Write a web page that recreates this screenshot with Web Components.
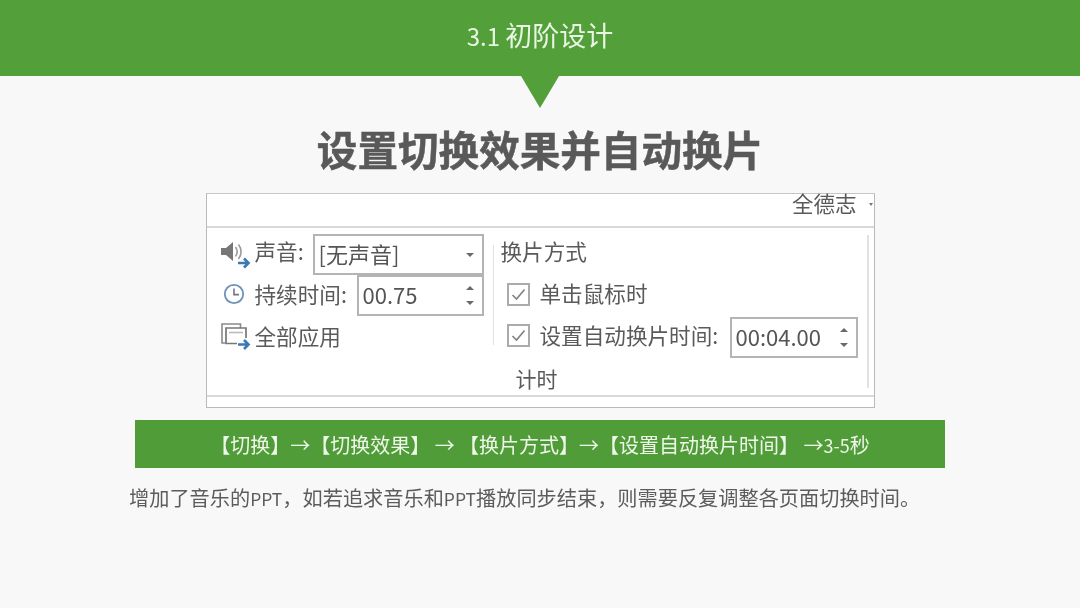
<!DOCTYPE html>
<html lang="zh">
<head>
<meta charset="utf-8">
<title>3.1 初阶设计</title>
<style>
  html, body { margin: 0; padding: 0; background: #f8f8f9; }
  body { width: 1080px; height: 608px; overflow: hidden; font-family: "Noto Sans CJK SC", "Noto Sans", sans-serif; }
  .small { font-size: 17.5px; }
  .smaller { font-size: 18px; }
  .num { font-size: 24px; }
</style>
</head>
<body>
<slide-page>
  <slide-header><span class="num">3.1 </span>初阶设计</slide-header>
  <slide-title>设置切换效果并自动换片</slide-title>
  <ribbon-panel owner="全德志">
    <ribbon-row slot="left" style="--lift: 8px">
      <ribbon-icon name="sound"></ribbon-icon>
      <span>声音:</span>
      <ribbon-input kind="select" width="171">[无声音]</ribbon-input>
    </ribbon-row>
    <ribbon-row slot="left" style="--lift: 4px">
      <ribbon-icon name="clock"></ribbon-icon>
      <span>持续时间:</span>
      <ribbon-input kind="spin" width="127">00.75</ribbon-input>
    </ribbon-row>
    <ribbon-row slot="left" style="--lift: 2px">
      <ribbon-icon name="apply"></ribbon-icon>
      <span>全部应用</span>
    </ribbon-row>
    <ribbon-row slot="right" style="--lift: 8px"><span>换片方式</span></ribbon-row>
    <ribbon-row slot="right" indent style="--lift: 8px">
      <ribbon-check></ribbon-check>
      <span>单击鼠标时</span>
    </ribbon-row>
    <ribbon-row slot="right" indent style="--lift: 6px">
      <ribbon-check></ribbon-check>
      <span>设置自动换片时间:</span>
      <ribbon-input kind="spin" width="128">00:04.00</ribbon-input>
    </ribbon-row>
    <span slot="group">计时</span>
  </ribbon-panel>
  <slide-banner>【切换】→【切换效果】 → 【换片方式】→【设置自动换片时间】 →<span class="smaller">3-5</span>秒</slide-banner>
  <slide-caption>增加了音乐的<span class="small">PPT</span>，如若追求音乐和<span class="small">PPT</span>播放同步结束，则需要反复调整各页面切换时间。</slide-caption>
</slide-page>

<script>
const ICONS = {
  sound: `<svg width="30" height="28" viewBox="0 0 30 28">
    <path d="M0 7h5l7-6v19l-7-6H0z" fill="#777"/>
    <path d="M14.5 6c2 2.8 2 6.6 0 9.4M17.5 3.5c3.4 4.2 3.4 10.2 0 14.4" fill="none" stroke="#9a9a9a" stroke-width="1.6"/>
    <path d="M17 22h10M23 17.5l4.5 4.5-4.5 4.5" fill="none" stroke="#3b78b5" stroke-width="2.6"/>
  </svg>`,
  clock: `<svg width="30" height="24" viewBox="0 0 30 24">
    <circle cx="13" cy="12" r="9.2" fill="none" stroke="#6d93b8" stroke-width="1.8"/>
    <path d="M13 6.5V12.6H18" fill="none" stroke="#6f7780" stroke-width="1.6"/>
  </svg>`,
  apply: `<svg width="30" height="27" viewBox="0 0 30 27">
    <path d="M4 20H1V1h18.5v4" fill="none" stroke="#8a8a8a" stroke-width="1.6"/>
    <path d="M16 20.5H5V5h20v10" fill="none" stroke="#777" stroke-width="1.7"/>
    <path d="M8 9.5h14" stroke="#bbb" stroke-width="1.6"/>
    <path d="M17 21.5h10M23 17l4.5 4.5-4.5 4.5" fill="none" stroke="#3b78b5" stroke-width="2.6"/>
  </svg>`
};

class ShadowElement extends HTMLElement {
  constructor() {
    super();
    this.attachShadow({ mode: 'open' });
    this.shadowRoot.innerHTML = this.markup();
  }
}

class SlidePage extends ShadowElement {
  markup() {
    return `<style>
      :host { display: flex; flex-direction: column; align-items: center; width: 1080px; height: 608px; }
    </style><slot></slot>`;
  }
}

class SlideHeader extends ShadowElement {
  markup() {
    return `<style>
      :host { display: block; position: relative; width: 100%; height: 76px; background: #53a03a; }
      .text { display: flex; align-items: baseline; justify-content: center; height: 68px; line-height: 70px; color: #eaf5e4; font-size: 27px; white-space: pre; filter: blur(0.3px); }
      .pointer { position: absolute; left: 521px; top: 76px; width: 0; height: 0;
        border-left: 19px solid transparent; border-right: 19px solid transparent; border-top: 32px solid #53a03a; }
    </style><div class="text"><span><slot></slot></span></div><div class="pointer"></div>`;
  }
}

class SlideTitle extends ShadowElement {
  markup() {
    return `<style>
      :host { display: block; margin-top: 45px; height: 56px; line-height: 56px; color: #595959;
        font-size: 40.6px; font-weight: 700; white-space: nowrap; -webkit-text-stroke: 0.5px #595959; filter: blur(0.4px); }
    </style><slot></slot>`;
  }
}

class RibbonPanel extends ShadowElement {
  markup() {
    return `<style>
      :host { display: block; box-sizing: border-box; width: 669px; height: 215px; margin-top: 16px;
        background: #fff; border: 1px solid #b9b9b9; border-top-color: #c6c6c6;
        color: #5a5a5a; font-size: 21.6px; filter: blur(0.45px); }
      .top { box-sizing: border-box; display: flex; justify-content: flex-end; align-items: flex-start; gap: 12px;
        height: 34px; padding-right: 1px; border-bottom: 2px solid #d9d9d9; }
      .owner { font-size: 21.5px; line-height: 18px; }
      .owner-arrow { width: 0; height: 0; margin-top: 9px; border-left: 2px solid transparent; border-right: 2px solid transparent; border-top: 3px solid #777; }
      .body { box-sizing: border-box; display: grid; grid-template-columns: 286px 1px 1fr 2px; height: 169px; padding-right: 5px; border-bottom: 2px solid #d9d9d9; }
      .left { display: grid; grid-auto-rows: 41px; align-content: start; padding: 6px 9px 0 14px; }
      .right { display: flex; flex-direction: column; padding: 6px 9px 0 7px; }
      .rows { display: grid; grid-auto-rows: 41.5px; }
      .group { display: block; margin: 4px 0 0 15px; line-height: 30px; font-size: 21px; }
      .sep { align-self: start; background: #e2e2e2; }
      .sep.a { margin-top: 17px; height: 100px; }
      .sep.b { margin-top: 7px; height: 153px; }
    </style>
    <div class="top"><span class="owner">${this.getAttribute('owner')}</span><span class="owner-arrow"></span></div>
    <div class="body">
      <div class="left"><slot name="left"></slot></div>
      <div class="sep a"></div>
      <div class="right">
        <div class="rows"><slot name="right"></slot></div>
        <div class="group"><slot name="group"></slot></div>
      </div>
      <div class="sep b"></div>
    </div>`;
  }
}

class RibbonRow extends ShadowElement {
  markup() {
    return `<style>
      :host { display: flex; align-items: center; white-space: nowrap; }
      :host([indent]) { padding-left: 6px; }
      ::slotted(span) { margin-bottom: var(--lift, 0); }
    </style><slot></slot>`;
  }
}

class RibbonIcon extends ShadowElement {
  markup() {
    return `<style>
      :host { display: flex; flex: none; width: 34px; align-items: center; }
      :host([name="clock"]) { margin-bottom: 4px; }
    </style>${ICONS[this.getAttribute('name')]}`;
  }
}

class RibbonInput extends ShadowElement {
  markup() {
    const spin = this.getAttribute('kind') === 'spin';
    const arrows = spin
      ? `<div class="arrows"><i class="up"></i><i class="down"></i></div>`
      : `<div class="arrows"><i class="down"></i></div>`;
    return `<style>
      :host { display: flex; box-sizing: border-box; flex: none; margin-left: auto; align-items: center;
        justify-content: space-between; width: ${this.getAttribute('width')}px; height: 41px;
        padding: 0 9px 0 4px; border: 2px solid #b4b4b4; color: #555; background: #fff; font-size: 22px; }
      .text { margin-bottom: 4px; }
      .arrows { display: flex; flex-direction: column; gap: 11px; margin-right: -1px; }
      i { display: block; width: 0; height: 0; border-left: 4.5px solid transparent; border-right: 4.5px solid transparent; }
      .up { border-bottom: 4.5px solid #6a6a6a; }
      .down { border-top: 4.5px solid #6a6a6a; }
    </style><span class="text"><slot></slot></span>${arrows}`;
  }
}

class RibbonCheck extends ShadowElement {
  markup() {
    return `<style>
      :host { display: flex; box-sizing: border-box; flex: none; width: 23px; height: 23px; margin: 0 10px 4px 0;
        align-items: center; justify-content: center; border: 2px solid #ababab; }
    </style><svg width="15" height="13" viewBox="0 0 15 13">
      <path d="M1.5 7l4 4 8-9.5" fill="none" stroke="#808080" stroke-width="1.6"/>
    </svg>`;
  }
}

class SlideBanner extends ShadowElement {
  markup() {
    return `<style>
      :host { display: flex; width: 810px; height: 48px; margin-top: 12px; align-items: center; justify-content: center;
        background: #509c38; color: #eef7e9; font-size: 20px; white-space: nowrap; }
      span { filter: blur(0.3px); }
    </style><span><slot></slot></span>`;
  }
}

class SlideCaption extends ShadowElement {
  markup() {
    return `<style>
      :host { display: block; align-self: flex-start; margin: 15px 0 0 129px; line-height: 30px;
        color: #5c5c5c; font-size: 20.2px; white-space: nowrap; filter: blur(0.3px); }
    </style><slot></slot>`;
  }
}

customElements.define('slide-page', SlidePage);
customElements.define('slide-header', SlideHeader);
customElements.define('slide-title', SlideTitle);
customElements.define('ribbon-panel', RibbonPanel);
customElements.define('ribbon-row', RibbonRow);
customElements.define('ribbon-icon', RibbonIcon);
customElements.define('ribbon-input', RibbonInput);
customElements.define('ribbon-check', RibbonCheck);
customElements.define('slide-banner', SlideBanner);
customElements.define('slide-caption', SlideCaption);
</script>
</body>
</html>
